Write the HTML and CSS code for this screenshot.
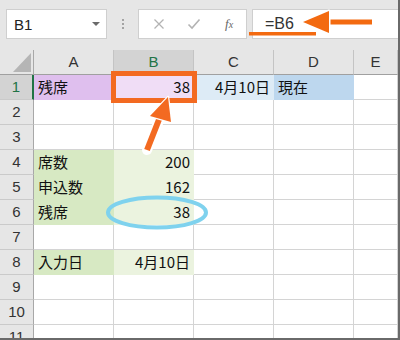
FILE: index.html
```html
<!DOCTYPE html>
<html lang="ja">
<head>
<meta charset="UTF-8">
<title>残席</title>
<link rel="stylesheet" href="styles.css">
</head>
<body>
<div class="frame">
  <div class="toolbar">
    <div class="namebox">
      <span>B1</span>
      <span class="drop"></span>
    </div>
    <div class="dots"><i></i><i></i><i></i></div>
    <div class="btnbox">
      <svg class="ico" width="12" height="12" viewBox="0 0 12 12"><path d="M1.5 1.5 L10.5 10.5 M10.5 1.5 L1.5 10.5" stroke="#b3b3b3" stroke-width="1.3" fill="none"/></svg>
      <svg class="ico" width="14" height="12" viewBox="0 0 14 12"><path d="M1.5 6.5 L5 10 L12.5 1.5" stroke="#b3b3b3" stroke-width="1.6" fill="none"/></svg>
      <span class="fx">f<sub>x</sub></span>
    </div>
    <div class="formula">=B6</div>
  </div>

  <div class="sheet">
    <div class="row head">
      <div class="rh corner"><div class="tri"></div></div>
      <div class="ch">A</div>
      <div class="ch sel">B</div>
      <div class="ch">C</div>
      <div class="ch">D</div>
      <div class="ch">E</div>
    </div>
    <div class="row">
      <div class="rh sel">1</div>
      <div class="c purple">残席</div>
      <div class="c lpurple num">38</div>
      <div class="c lblue num">4月10日</div>
      <div class="c blue">現在</div>
      <div class="c"></div>
    </div>
    <div class="row">
      <div class="rh">2</div>
      <div class="c"></div><div class="c"></div><div class="c"></div><div class="c"></div><div class="c"></div>
    </div>
    <div class="row">
      <div class="rh">3</div>
      <div class="c"></div><div class="c"></div><div class="c"></div><div class="c"></div><div class="c"></div>
    </div>
    <div class="row">
      <div class="rh">4</div>
      <div class="c green">席数</div>
      <div class="c lgreen num">200</div>
      <div class="c"></div><div class="c"></div><div class="c"></div>
    </div>
    <div class="row">
      <div class="rh">5</div>
      <div class="c green">申込数</div>
      <div class="c lgreen num">162</div>
      <div class="c"></div><div class="c"></div><div class="c"></div>
    </div>
    <div class="row">
      <div class="rh">6</div>
      <div class="c green">残席</div>
      <div class="c lgreen num">38</div>
      <div class="c"></div><div class="c"></div><div class="c"></div>
    </div>
    <div class="row">
      <div class="rh">7</div>
      <div class="c"></div><div class="c"></div><div class="c"></div><div class="c"></div><div class="c"></div>
    </div>
    <div class="row">
      <div class="rh">8</div>
      <div class="c green">入力日</div>
      <div class="c lgreen num">4月10日</div>
      <div class="c"></div><div class="c"></div><div class="c"></div>
    </div>
    <div class="row">
      <div class="rh">9</div>
      <div class="c"></div><div class="c"></div><div class="c"></div><div class="c"></div><div class="c"></div>
    </div>
    <div class="row">
      <div class="rh">10</div>
      <div class="c"></div><div class="c"></div><div class="c"></div><div class="c"></div><div class="c"></div>
    </div>
    <div class="row">
      <div class="rh">11</div>
      <div class="c"></div><div class="c"></div><div class="c"></div><div class="c"></div><div class="c"></div>
    </div>
  </div>

  <!-- annotations drawn over the screenshot -->
  <svg class="marks" width="400" height="340" viewBox="0 0 400 340">
    <rect x="113.5" y="73.5" width="81" height="27" fill="none" stroke="#f36a21" stroke-width="5"/>
    <path d="M147 150 L160 118" stroke="#fff" stroke-width="10" stroke-linecap="round"/>
    <path d="M147 150 L160 117" stroke="#f36a21" stroke-width="6"/>
    <polygon points="168,97 150,116 171,122" fill="#f36a21" stroke="#fff" stroke-width="2.5" stroke-linejoin="round"/>
    <polygon points="168,97 150,116 171,122" fill="#f36a21"/>
    <ellipse cx="157" cy="212.5" rx="49" ry="15" fill="none" stroke="#7fd2ee" stroke-width="4"/>
    <rect x="249" y="32" width="67" height="3.5" fill="#f36a10"/>
    <path d="M328 22 L372 22" stroke="#f36a10" stroke-width="5"/>
    <polygon points="303,22 329,11 329,33" fill="#f36a10" stroke="#fff" stroke-width="3" stroke-linejoin="round"/>
    <polygon points="303,22 329,11 329,33" fill="#f36a10"/>
  </svg>
</div>
</body>
</html>
```

FILE: styles.css
```css
body{
  margin: 0;
  background: #fff;
  font-family: "Noto Sans CJK JP", "Liberation Sans", sans-serif;
}
.frame{
  position: relative;
  width: 400px;
  height: 340px;
  box-sizing: border-box;
  border-right: 2px solid #6a6a6a;
  border-bottom: 2px solid #6a6a6a;
  overflow: hidden;
}

/* formula bar */
.toolbar{
  height: 50px;
  box-sizing: border-box;
  background: #e6e6e6;
  padding: 9px 0 0 6px;
  display: flex;
  align-items: flex-start;
}
.namebox{
  width: 101px;
  height: 30px;
  box-sizing: border-box;
  background: #fff;
  border: 1px solid #cfcfcf;
  display: flex;
  align-items: center;
  justify-content: space-between;
  padding: 0 6px 0 7px;
  font-family: "Liberation Sans", sans-serif;
  font-size: 15px;
  color: #222;
}
.drop{
  width: 0;
  height: 0;
  border-left: 4px solid transparent;
  border-right: 4px solid transparent;
  border-top: 4px solid #6a6a6a;
}
.dots{
  width: 31px;
  height: 30px;
  display: flex;
  flex-direction: column;
  align-items: center;
  justify-content: center;
  gap: 2px;
}
.dots i{
  width: 2px;
  height: 2px;
  background: #a3a3a3;
}
.btnbox{
  width: 109px;
  height: 30px;
  box-sizing: border-box;
  background: #fff;
  border: 1px solid #cfcfcf;
  display: flex;
  align-items: center;
  padding-left: 14px;
  gap: 22px;
}
.fx{
  font-family: "Liberation Serif", serif;
  font-style: italic;
  font-size: 13px;
  color: #666;
  margin-left: 2px;
}
.fx sub{
  font-size: 10px;
  vertical-align: 0;
}
.formula{
  flex: 1;
  height: 30px;
  margin-left: 5px;
  box-sizing: border-box;
  background: #fff;
  border: 1px solid #cfcfcf;
  border-right: 0;
  padding-left: 12px;
  font-family: "Liberation Sans", sans-serif;
  font-size: 16px;
  line-height: 28px;
  color: #333;
}

/* grid */
.row{
  display: grid;
  grid-template-columns: 34px 80px 80px 80px 80px 1fr;
  height: 25px;
}
.row > div{
  box-sizing: border-box;
  border-right: 1px solid #d4d4d4;
  border-bottom: 1px solid #d4d4d4;
  font-size: 15px;
  line-height: 24px;
  color: #111;
  white-space: nowrap;
  overflow: hidden;
}
.row .rh{
  background: #e6e6e6;
  border-right-color: #a8a8a8;
  border-bottom-color: #cacaca;
  text-align: center;
  font-family: "Liberation Sans", sans-serif;
  font-size: 15px;
  color: #333;
}
.row .rh.sel{
  background: #d3d3d3;
  border-right: 2px solid #217346;
  color: #217346;
}
.head .ch{
  background: #e6e6e6;
  border-right-color: #c4c4c4;
  border-bottom-color: #a0a0a0;
  text-align: center;
  font-family: "Liberation Sans", sans-serif;
  font-size: 15px;
  color: #333;
}
.head .ch.sel{
  background: #d3d3d3;
  color: #217346;
}
.head .corner{
  border-bottom-color: #a0a0a0;
  display: flex;
  align-items: flex-end;
  justify-content: flex-end;
  padding: 0 2px 2px 0;
}
.tri{
  width: 18px;
  height: 19px;
  background: #b5b5b5;
  clip-path: polygon(100% 0, 100% 100%, 0 100%);
}
.c{
  padding: 0 3px 0 4px;
}
.num{
  text-align: right;
}
.row .purple{ background: #dfbfee; border-color: #dfbfee; }
.row .lpurple{ background: #f0ddf6; border-color: #f0ddf6; }
.row .lblue{ background: #ddebf6; border-color: #ddebf6; }
.row .blue{ background: #bdd7ee; border-color: #bdd7ee; }
.row .green{ background: #d7e9c3; border-color: #d7e9c3; }
.row .lgreen{ background: #ebf3df; border-color: #ebf3df; }

.marks{
  position: absolute;
  left: 0;
  top: 0;
  pointer-events: none;
}
```
